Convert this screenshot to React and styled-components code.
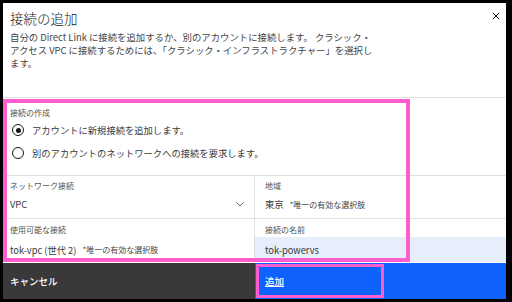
import React from "react";
import styled, { createGlobalStyle } from "styled-components";

const Global = createGlobalStyle`
    body {
        margin: 0;
        background: #000;
        font-family: "Noto Sans CJK JP", "Noto Sans", sans-serif;
    }
`;

const Frame = styled.div`
    width: 512px;
    height: 302px;
    box-sizing: border-box;
    padding: 3px 6px 3px 3px;
    background: #000;
`;

const Modal = styled.div`
    position: relative;
    height: 100%;
    background: #fff;
    display: flex;
    flex-direction: column;
`;

const Header = styled.header`
    height: 94px;
    box-sizing: border-box;
    padding: 6px 7px 0;
`;

const Title = styled.h2`
    margin: 0;
    font-size: 13.5px;
    line-height: 18px;
    font-weight: 300;
    color: #161616;
`;

const Desc = styled.p`
    margin: 4px 0 0;
    font-size: 9.4px;
    line-height: 13px;
    color: #444;
`;

const Close = styled.button`
    position: absolute;
    top: 9px;
    right: 6px;
    width: 8px;
    height: 8px;
    padding: 0;
    border: 0;
    background: none;
    display: flex;
`;

const Form = styled.section`
    flex: 1;
    border-top: 1px solid #e4e4e4;
    display: flex;
    flex-direction: column;
`;

const RadioGroup = styled.fieldset`
    margin: 0;
    border: 0;
    height: 77px;
    box-sizing: border-box;
    padding: 10px 7px 0;
`;

const Legend = styled.div`
    font-size: 8px;
    line-height: 10px;
    color: #525252;
`;

const RadioList = styled.div`
    margin-top: 4px;
    display: flex;
    flex-direction: column;
    gap: 7px;
`;

const RadioRow = styled.label`
    display: flex;
    align-items: center;
    gap: 8px;
    height: 16px;
    padding-left: 2px;
    font-size: 9.3px;
    color: #393939;
`;

const Circle = styled.span`
    width: 12px;
    height: 12px;
    box-sizing: border-box;
    border: 1px solid #161616;
    border-radius: 50%;
    display: flex;
    align-items: center;
    justify-content: center;
    &::after {
        content: "";
        width: 5px;
        height: 5px;
        border-radius: 50%;
        background: ${(p) => (p.$checked ? "#161616" : "transparent")};
    }
`;

const Grid = styled.div`
    flex: 1;
    display: grid;
    grid-template-columns: 252px 1fr;
    grid-template-rows: 43px 1fr;
`;

const Cell = styled.div`
    border-top: 1px solid #e0e0e0;
    border-right: ${(p) => (p.$left ? "1px solid #e0e0e0" : "0")};
    padding-top: ${(p) => (p.$second ? "6px" : "5px")};
    padding-left: ${(p) => (p.$left ? "7px" : "10px")};
    position: relative;
`;

const Label = styled.div`
    font-size: 8px;
    line-height: 10px;
    color: #525252;
`;

const Value = styled.div`
    display: flex;
    align-items: center;
    gap: 6px;
    font-size: 9.3px;
    color: #393939;
    height: ${(p) => (p.$tall ? "25px" : "14px")};
    margin-top: ${(p) => (p.$tall ? "2px" : "6px")};
    margin-left: ${(p) => (p.$field ? "-10px" : "0")};
    padding-left: ${(p) => (p.$field ? "10px" : "0")};
    background: ${(p) => (p.$field ? "#e6edfb" : "transparent")};
`;

const Note = styled.span`
    font-size: 8px;
    color: #444;
`;

const Chevron = styled.svg`
    position: absolute;
    right: 10px;
    top: 26px;
`;

const Footer = styled.footer`
    height: 36px;
    display: grid;
    grid-template-columns: 252px 1fr;
`;

const Button = styled.button`
    border: 0;
    margin: 0;
    font-family: inherit;
    font-size: 9.5px;
    font-weight: 500;
    color: #fff;
    text-align: left;
    padding: 0 0 0 ${(p) => (p.$primary ? "10px" : "7px")};
    background: ${(p) => (p.$primary ? "#0f62fe" : "#393939")};
    text-decoration: ${(p) => (p.$primary ? "underline" : "none")};
`;

// annotation boxes drawn over the dialog
const Highlight = styled.div`
    position: absolute;
    box-sizing: border-box;
    border: ${(p) => p.$w}px solid #ff5ccd;
    left: ${(p) => p.$x}px;
    top: ${(p) => p.$y}px;
    width: ${(p) => p.$width}px;
    height: ${(p) => p.$height}px;
    pointer-events: none;
`;

export default function App() {
    return (
        <Frame>
            <Global />
            <Modal>
                <Header>
                    <Title>接続の追加</Title>
                    <Desc>
                        自分の Direct Link に接続を追加するか、別のアカウントに接続します。 クラシック・
                        <br />
                        アクセス VPC に接続するためには、「クラシック・インフラストラクチャー」を選択し
                        <br />
                        ます。
                    </Desc>
                </Header>
                <Close aria-label="閉じる">
                    <svg width="8" height="8" viewBox="0 0 8 8">
                        <path d="M1 1 L7 7 M7 1 L1 7" stroke="#161616" strokeWidth="1" />
                    </svg>
                </Close>

                <Form>
                    <RadioGroup>
                        <Legend>接続の作成</Legend>
                        <RadioList>
                            <RadioRow>
                                <Circle $checked />
                                アカウントに新規接続を追加します。
                            </RadioRow>
                            <RadioRow>
                                <Circle />
                                別のアカウントのネットワークへの接続を要求します。
                            </RadioRow>
                        </RadioList>
                    </RadioGroup>

                    <Grid>
                        <Cell $left>
                            <Label>ネットワーク接続</Label>
                            <Value>VPC</Value>
                            <Chevron width="8" height="5" viewBox="0 0 8 5">
                                <path d="M0.5 0.5 L4 4 L7.5 0.5" fill="none" stroke="#525252" strokeWidth="0.9" />
                            </Chevron>
                        </Cell>
                        <Cell>
                            <Label>地域</Label>
                            <Value>
                                東京 <Note>*唯一の有効な選択肢</Note>
                            </Value>
                        </Cell>
                        <Cell $left $second>
                            <Label>使用可能な接続</Label>
                            <Value $tall>
                                tok-vpc (世代 2) <Note>*唯一の有効な選択肢</Note>
                            </Value>
                        </Cell>
                        <Cell $second>
                            <Label>接続の名前</Label>
                            <Value $tall $field>
                                tok-powervs
                            </Value>
                        </Cell>
                    </Grid>
                </Form>

                <Footer>
                    <Button>キャンセル</Button>
                    <Button $primary>追加</Button>
                </Footer>

                <Highlight $w={4} $x={0} $y={96} $width={407} $height={163} />
                <Highlight $w={3} $x={253} $y={261} $width={128} $height={34} />
            </Modal>
        </Frame>
    );
}
